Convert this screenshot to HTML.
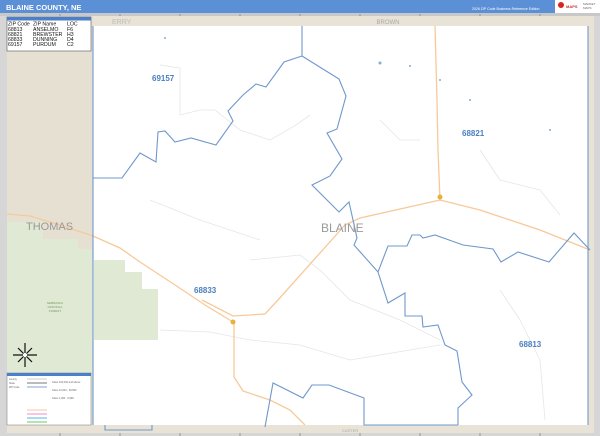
<!DOCTYPE html>
<html><head><meta charset="utf-8"><style>
html,body{margin:0;padding:0;width:600px;height:436px;overflow:hidden;background:#fff;font-family:"Liberation Sans",sans-serif}
</style></head><body>
<svg width="600" height="436" viewBox="0 0 600 436" xmlns="http://www.w3.org/2000/svg" font-family="Liberation Sans, sans-serif">
<rect width="600" height="436" fill="#fff"/>
<!-- header -->
<rect x="0" y="0" width="600" height="13" fill="#5b8fd6"/>
<text x="6" y="10" font-size="7.5" font-weight="bold" fill="#fff">BLAINE COUNTY, NE</text>
<text x="472" y="10" font-size="3.5" fill="#fff">2026 ZIP Code Business Reference Edition</text>
<rect x="555" y="0" width="45" height="13" fill="#fff"/>
<circle cx="561" cy="5" r="3" fill="#d22"/>
<text x="566" y="8" font-size="4" fill="#c33" font-weight="bold">MAPS</text>
<text x="583" y="5" font-size="3" fill="#666">MARKET</text>
<text x="583" y="9" font-size="3" fill="#666">MAPS</text>
<!-- frame -->
<rect x="0" y="13" width="600" height="423" fill="#d6d6d6"/>
<rect x="0" y="13" width="600" height="3" fill="#c8c8c8"/>
<rect x="7" y="16" width="587" height="417" fill="#e8e3d6"/>
<rect x="93" y="26" width="495" height="399" fill="#fff"/>
<!-- Thomas county -->
<rect x="7" y="16" width="86" height="409" fill="#e6e0d3"/>
<path d="M7 222 L43 222 L43 239 L78 239 L78 249 L93 249 L93 425 L7 425 Z" fill="#dfe9d4"/>
<path d="M94 260 L125 260 L125 272 L142 272 L142 289 L158 289 L158 340 L94 340 Z" fill="#dfe9d4"/>
<text x="55" y="304" font-size="3" fill="#7a9a5a" text-anchor="middle">NEBRASKA</text>
<text x="55" y="308" font-size="3" fill="#7a9a5a" text-anchor="middle">NATIONAL</text>
<text x="55" y="312" font-size="3" fill="#7a9a5a" text-anchor="middle">FOREST</text>
<!-- tick marks -->
<g stroke="#888" stroke-width="0.8">
<line x1="60" y1="14" x2="60" y2="16"/><line x1="120" y1="14" x2="120" y2="16"/><line x1="180" y1="14" x2="180" y2="16"/><line x1="240" y1="14" x2="240" y2="16"/><line x1="300" y1="14" x2="300" y2="16"/><line x1="360" y1="14" x2="360" y2="16"/><line x1="420" y1="14" x2="420" y2="16"/><line x1="480" y1="14" x2="480" y2="16"/><line x1="540" y1="14" x2="540" y2="16"/>
<line x1="60" y1="433" x2="60" y2="436"/><line x1="120" y1="433" x2="120" y2="436"/><line x1="180" y1="433" x2="180" y2="436"/><line x1="240" y1="433" x2="240" y2="436"/><line x1="300" y1="433" x2="300" y2="436"/><line x1="360" y1="433" x2="360" y2="436"/><line x1="420" y1="433" x2="420" y2="436"/><line x1="480" y1="433" x2="480" y2="436"/><line x1="540" y1="433" x2="540" y2="436"/>
</g>
<text x="112" y="24" font-size="7" fill="#bbb">ERRY</text>
<text x="388" y="24" font-size="6" fill="#aaa" text-anchor="middle">BROWN</text>
<text x="350" y="432" font-size="4" fill="#aaa" text-anchor="middle">CUSTER</text>
<!-- faint local roads -->
<g stroke="#e6e6e6" stroke-width="0.8" fill="none">
<path d="M160 65 L180 68 L180 115 L200 110 L215 110 L240 130 L270 140 L296 125 L310 115"/>
<path d="M250 260 L300 255 L320 270 L350 300 L400 320 L440 340"/>
<path d="M160 330 L210 332 L250 340 L300 345 L350 360 L410 350 L440 345"/>
<path d="M500 290 L520 320 L540 360 L545 420"/>
<path d="M480 150 L500 180 L540 190 L560 215"/>
<path d="M150 200 L200 220 L260 240"/>
<path d="M380 120 L400 140 L420 140"/>
</g>
<!-- roads -->
<g stroke="#f7c99a" stroke-width="1.3" fill="none">
<path d="M7 214 L30 216 L60 225 L93 236 L120 248 L140 262 L175 285 L205 305 L233 322"/>
<path d="M202 300 L233 316 L265 314 L278 300 L345 225 L360 218 L440 200 L480 210 L540 230 L590 250"/>
<path d="M440 200 L438 150 L437 100 L435 26"/>
<path d="M234 322 L234 377 L243 391 L270 400 L290 410 L305 425"/>
</g>
<!-- zip boundaries -->
<g stroke="#6f98cc" stroke-width="1.1" fill="none">
<path d="M93 26 L93 425"/>
<path d="M588 26 L588 425"/>
<path d="M302 26 L302 56 L284 62 L266 87 L256 84 L243 95 L228 111 L233 121 L216 145 L191 138 L175 142 L165 131 L158 132 L156 162 L140 153 L122 178 L93 178"/>
<path d="M302 56 L339 79 L346 96 L337 129 L327 133 L342 159 L330 176 L312 185 L339 212 L349 202 L357 238 L354 245 L378 272 L388 246 L407 246 L412 235 L420 235 L423 238 L435 235 L463 245 L493 249 L501 262 L518 252 L549 262 L574 233 L590 250"/>
<path d="M378 272 L388 303 L405 293 L405 316 L422 316 L423 327 L438 325 L445 345 L457 351 L462 382 L472 395 L458 408 L458 425"/>
<path d="M265 427 L273 383 L303 398 L312 385 L329 385 L364 398 L364 425 L458 425"/>
<path d="M105 425 L105 430 L152 430 L152 425"/>
</g>
<!-- water dots -->
<g fill="#7fb0dd">
<circle cx="165" cy="38" r="1"/><circle cx="380" cy="63" r="1.5"/><circle cx="410" cy="66" r="1"/><circle cx="440" cy="80" r="1"/><circle cx="550" cy="130" r="1"/><circle cx="470" cy="100" r="1"/>
</g>
<!-- towns -->
<circle cx="440" cy="197" r="2.5" fill="#e8b23a"/>
<circle cx="233" cy="322" r="2.5" fill="#e8b23a"/>
<!-- labels -->
<g font-size="8" font-weight="bold" fill="#4a7fc0">
<text x="152" y="81">69157</text>
<text x="462" y="136">68821</text>
<text x="194" y="293">68833</text>
<text x="519" y="347">68813</text>
</g>
<text x="321" y="232" font-size="12" fill="#9a9a9a">BLAINE</text>
<text x="26" y="230" font-size="11" fill="#999">THOMAS</text>
<!-- legend top -->
<rect x="7" y="17" width="84" height="34" fill="#fff" stroke="#555" stroke-width="0.6"/>
<rect x="7" y="17" width="84" height="3.5" fill="#4a7fcc"/>
<g font-size="5.2" fill="#111">
<text x="8" y="25.5">ZIP Code</text><text x="33" y="25.5">ZIP Name</text><text x="67" y="25.5">LOC</text>
<text x="8" y="31">68813</text><text x="33" y="31">ANSELMO</text><text x="67" y="31">F6</text>
<text x="8" y="36">68821</text><text x="33" y="36">BREWSTER</text><text x="67" y="36">H3</text>
<text x="8" y="41">68833</text><text x="33" y="41">DUNNING</text><text x="67" y="41">D4</text>
<text x="8" y="46">69157</text><text x="33" y="46">PURDUM</text><text x="67" y="46">C2</text>
</g>
<!-- compass -->
<g stroke="#111" stroke-width="1.2">
<line x1="25" y1="343" x2="25" y2="367"/><line x1="13" y1="355" x2="37" y2="355"/>
<line x1="18" y1="348" x2="32" y2="362"/><line x1="32" y1="348" x2="18" y2="362"/>
</g>
<circle cx="25" cy="355" r="2" fill="#fff"/>
<!-- legend bottom -->
<rect x="7" y="373" width="84" height="52" fill="#fff" stroke="#777" stroke-width="0.5"/>
<rect x="7" y="373" width="84" height="3" fill="#4a7fcc"/>
<g stroke-width="1">
<line x1="27" y1="379" x2="47" y2="379" stroke="#ccc"/>
<line x1="27" y1="383" x2="47" y2="383" stroke="#777"/>
<line x1="27" y1="387" x2="47" y2="387" stroke="#7fa5d5"/>
<line x1="27" y1="410" x2="47" y2="410" stroke="#f7c99a"/>
<line x1="27" y1="414" x2="47" y2="414" stroke="#f08ad0"/>
<line x1="27" y1="418" x2="47" y2="418" stroke="#5ab0e8"/>
<line x1="27" y1="422" x2="47" y2="422" stroke="#6c6"/>
</g>
<g font-size="2.5" fill="#666">
<text x="9" y="380">County</text><text x="9" y="384">State</text><text x="9" y="388">ZIP Code</text><text x="52" y="383">Cities 100,000 and above</text><text x="52" y="391">Cities 10,000 - 99,999</text><text x="52" y="399">Cities 1,000 - 9,999</text>
</g>
</svg>
</body></html>
